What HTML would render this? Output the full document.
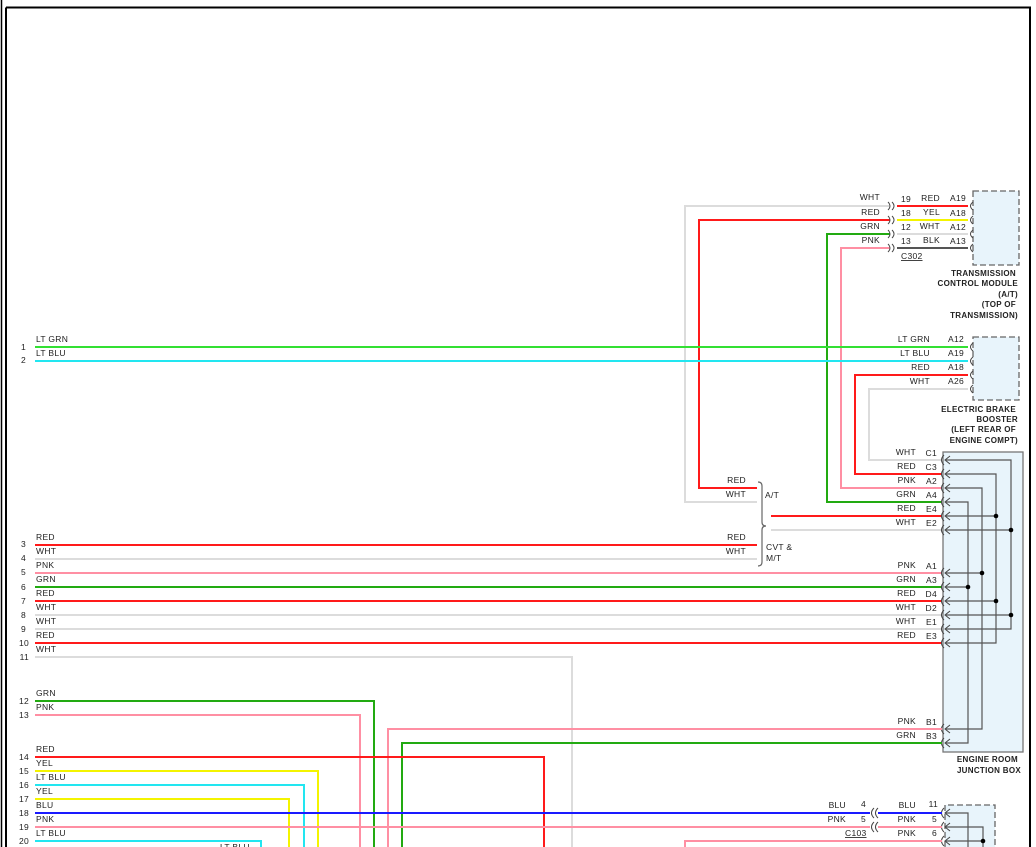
<!DOCTYPE html>
<html><head><meta charset="utf-8"><style>
html,body{margin:0;padding:0;background:#fff;width:1036px;height:847px;overflow:hidden}
svg{display:block}
text{font-family:"Liberation Sans",sans-serif;font-size:8.5px;fill:#222;letter-spacing:0.3px}
.r{text-anchor:end}
.b{font-weight:bold;font-size:8px}
.w{fill:none;stroke-width:2}
.k{fill:none;stroke:#555;stroke-width:1.2}
.c{fill:none;stroke:#444;stroke-width:1}
</style></head><body>
<svg width="1036" height="847" viewBox="0 0 1036 847">
<!-- frame -->
<line x1="1.5" y1="0" x2="1.5" y2="847" stroke="#000" stroke-width="1.5"/>
<line x1="6" y1="7.5" x2="6" y2="847" stroke="#000" stroke-width="2"/>
<line x1="6" y1="7.5" x2="1031" y2="7.5" stroke="#000" stroke-width="2"/>
<line x1="1030" y1="7.5" x2="1030" y2="847" stroke="#000" stroke-width="2"/>

<!-- boxes -->
<rect x="973" y="191" width="46" height="74" fill="#e8f4fb" stroke="#666" stroke-dasharray="6,3" stroke-width="1.3"/>
<rect x="973" y="337" width="46" height="63" fill="#e8f4fb" stroke="#666" stroke-dasharray="6,3" stroke-width="1.3"/>
<rect x="943" y="452" width="80" height="300" fill="#e8f4fb" stroke="#777" stroke-width="1.3"/>
<path d="M945,847 V805 H995 V847" fill="#e8f4fb" stroke="#666" stroke-dasharray="6,3" stroke-width="1.3"/>

<!-- TCM top wires -->
<line class="w" x1="897" y1="206" x2="968" y2="206" stroke="#ff1a1a"/>
<line class="w" x1="897" y1="220" x2="968" y2="220" stroke="#f4f400"/>
<line class="w" x1="897" y1="234" x2="968" y2="234" stroke="#dcdcdc"/>
<line class="w" x1="897" y1="248" x2="968" y2="248" stroke="#555"/>
<path class="w" d="M890,206 H685 V502 H757" stroke="#dcdcdc"/>
<path class="w" d="M890,220 H699 V488 H757" stroke="#ff1a1a"/>
<path class="w" d="M890,234 H827 V502 H942" stroke="#22aa11"/>
<path class="w" d="M890,248 H841 V488 H942" stroke="#ff8fa3"/>
<!-- C302 connector marks -->
<g class="c">
<path d="M888,202 Q892,206 888,210 M892,202 Q896,206 892,210"/>
<path d="M888,216 Q892,220 888,224 M892,216 Q896,220 892,224"/>
<path d="M888,230 Q892,234 888,238 M892,230 Q896,234 892,238"/>
<path d="M888,244 Q892,248 888,252 M892,244 Q896,248 892,252"/>
<path d="M973,202 Q968,206 973,210 M973,216 Q968,220 973,224 M973,230 Q968,234 973,238 M973,244 Q968,248 973,252"/>
<path d="M973,343 Q968,347 973,351 M973,357 Q968,361 973,365 M973,371 Q968,375 973,379 M973,385 Q968,389 973,393"/>
</g>
<text class="r" x="880" y="200">WHT</text>
<text class="r" x="880" y="215">RED</text>
<text class="r" x="880" y="229">GRN</text>
<text class="r" x="880" y="243">PNK</text>
<text x="901" y="202">19</text><text class="r" x="940" y="201">RED</text><text class="r" x="966" y="201">A19</text>
<text x="901" y="216">18</text><text class="r" x="940" y="215">YEL</text><text class="r" x="966" y="216">A18</text>
<text x="901" y="230">12</text><text class="r" x="940" y="229">WHT</text><text class="r" x="966" y="230">A12</text>
<text x="901" y="244">13</text><text class="r" x="940" y="243">BLK</text><text class="r" x="966" y="244">A13</text>
<text x="901" y="259" text-decoration="underline">C302</text>
<text class="r b" x="1016" y="276">TRANSMISSION</text>
<text class="r b" x="1018" y="286">CONTROL MODULE</text>
<text class="r b" x="1018" y="297">(A/T)</text>
<text class="r b" x="1016" y="307">(TOP OF</text>
<text class="r b" x="1018" y="318">TRANSMISSION)</text>

<!-- rows 1,2 -->
<line class="w" x1="35" y1="347" x2="968" y2="347" stroke="#33e033"/>
<line class="w" x1="35" y1="361" x2="968" y2="361" stroke="#22e6f0"/>
<text class="r" x="930" y="342">LT GRN</text><text class="r" x="964" y="342">A12</text>
<text class="r" x="930" y="356">LT BLU</text><text class="r" x="964" y="356">A19</text>
<text class="r" x="930" y="370">RED</text><text class="r" x="964" y="370">A18</text>
<text class="r" x="930" y="384">WHT</text><text class="r" x="964" y="384">A26</text>
<path class="w" d="M968,375 H855 V474 H942" stroke="#ff1a1a"/>
<path class="w" d="M968,389 H869 V460 H942" stroke="#dcdcdc"/>
<text class="r b" x="1016" y="412">ELECTRIC BRAKE</text>
<text class="r b" x="1018" y="422">BOOSTER</text>
<text class="r b" x="1016" y="432">(LEFT REAR OF</text>
<text class="r b" x="1018" y="443">ENGINE COMPT)</text>

<!-- A/T bracket -->
<text class="r" x="746" y="483">RED</text>
<text class="r" x="746" y="497">WHT</text>
<text x="765" y="498">A/T</text>
<path d="M758,482 Q762,482 762,486 V522 Q762,526 766,526 Q762,526 762,530 V562 Q762,566 758,566" fill="none" stroke="#666" stroke-width="1.2"/>
<line class="w" x1="771" y1="516" x2="942" y2="516" stroke="#ff1a1a"/>
<line class="w" x1="771" y1="530" x2="942" y2="530" stroke="#dcdcdc"/>
<text class="r" x="746" y="540">RED</text>
<text class="r" x="746" y="554">WHT</text>
<text x="766" y="550">CVT &amp;</text>
<text x="766" y="561">M/T</text>

<!-- left rows 3-11 -->
<line class="w" x1="35" y1="545" x2="757" y2="545" stroke="#ff1a1a"/>
<line class="w" x1="35" y1="559" x2="757" y2="559" stroke="#dcdcdc"/>
<line class="w" x1="35" y1="573" x2="942" y2="573" stroke="#ff8fa3"/>
<line class="w" x1="35" y1="587" x2="942" y2="587" stroke="#22aa11"/>
<line class="w" x1="35" y1="601" x2="942" y2="601" stroke="#ff1a1a"/>
<line class="w" x1="35" y1="615" x2="942" y2="615" stroke="#dcdcdc"/>
<line class="w" x1="35" y1="629" x2="942" y2="629" stroke="#dcdcdc"/>
<line class="w" x1="35" y1="643" x2="942" y2="643" stroke="#ff1a1a"/>
<path class="w" d="M35,657 H572 V847" stroke="#dcdcdc"/>

<!-- JB labels -->
<text class="r" x="916" y="455">WHT</text><text class="r" x="937" y="456">C1</text>
<text class="r" x="916" y="469">RED</text><text class="r" x="937" y="470">C3</text>
<text class="r" x="916" y="483">PNK</text><text class="r" x="937" y="484">A2</text>
<text class="r" x="916" y="497">GRN</text><text class="r" x="937" y="498">A4</text>
<text class="r" x="916" y="511">RED</text><text class="r" x="937" y="512">E4</text>
<text class="r" x="916" y="525">WHT</text><text class="r" x="937" y="526">E2</text>
<text class="r" x="916" y="568">PNK</text><text class="r" x="937" y="569">A1</text>
<text class="r" x="916" y="582">GRN</text><text class="r" x="937" y="583">A3</text>
<text class="r" x="916" y="596">RED</text><text class="r" x="937" y="597">D4</text>
<text class="r" x="916" y="610">WHT</text><text class="r" x="937" y="611">D2</text>
<text class="r" x="916" y="624">WHT</text><text class="r" x="937" y="625">E1</text>
<text class="r" x="916" y="638">RED</text><text class="r" x="937" y="639">E3</text>
<text class="r" x="916" y="724">PNK</text><text class="r" x="937" y="725">B1</text>
<text class="r" x="916" y="738">GRN</text><text class="r" x="937" y="739">B3</text>
<text class="r b" x="1018" y="762">ENGINE ROOM</text>
<text class="r b" x="1021" y="773">JUNCTION BOX</text>

<!-- JB internal -->
<g class="k">
<path d="M946,460 H1011 V629 H946 M946,530 H1011 M946,615 H1011"/>
<path d="M946,474 H996 V643 H946 M946,516 H996 M946,601 H996"/>
<path d="M946,488 H982 V729 H946 M946,573 H982"/>
<path d="M946,502 H968 V743 H946 M946,587 H968"/>
<path d="M946,813 H968 V847 M946,827 H983 V847 M946,841 H983"/>
</g>
<g fill="#000">
<circle cx="1011" cy="530" r="2.3"/><circle cx="1011" cy="615" r="2.3"/>
<circle cx="996" cy="516" r="2.3"/><circle cx="996" cy="601" r="2.3"/>
<circle cx="982" cy="573" r="2.3"/><circle cx="968" cy="587" r="2.3"/>
<circle cx="983" cy="841" r="2.3"/>
</g>
<g class="c">
<path d="M944,455 Q939,460 944,465 M950,456 L945,460 L950,464"/>
<path d="M944,469 Q939,474 944,479 M950,470 L945,474 L950,478"/>
<path d="M944,483 Q939,488 944,493 M950,484 L945,488 L950,492"/>
<path d="M944,497 Q939,502 944,507 M950,498 L945,502 L950,506"/>
<path d="M944,511 Q939,516 944,521 M950,512 L945,516 L950,520"/>
<path d="M944,525 Q939,530 944,535 M950,526 L945,530 L950,534"/>
<path d="M944,568 Q939,573 944,578 M950,569 L945,573 L950,577"/>
<path d="M944,582 Q939,587 944,592 M950,583 L945,587 L950,591"/>
<path d="M944,596 Q939,601 944,606 M950,597 L945,601 L950,605"/>
<path d="M944,610 Q939,615 944,620 M950,611 L945,615 L950,619"/>
<path d="M944,624 Q939,629 944,634 M950,625 L945,629 L950,633"/>
<path d="M944,638 Q939,643 944,648 M950,639 L945,643 L950,647"/>
<path d="M944,724 Q939,729 944,734 M950,725 L945,729 L950,733"/>
<path d="M944,738 Q939,743 944,748 M950,739 L945,743 L950,747"/>
<path d="M944,808 Q939,813 944,818 M950,809 L945,813 L950,817"/>
<path d="M944,822 Q939,827 944,832 M950,823 L945,827 L950,831"/>
<path d="M944,836 Q939,841 944,846 M950,837 L945,841 L950,845"/>
<path d="M874,808 Q869,813 874,818 M878,808 Q873,813 878,818"/>
<path d="M874,822 Q869,827 874,832 M878,822 Q873,827 878,832"/>
</g>

<!-- rows 12-20 -->
<path class="w" d="M35,701 H374 V847" stroke="#22aa11"/>
<path class="w" d="M35,715 H360 V847" stroke="#ff8fa3"/>
<path class="w" d="M942,729 H388 V847" stroke="#ff8fa3"/>
<path class="w" d="M942,743 H402 V847" stroke="#22aa11"/>
<path class="w" d="M35,757 H544 V847" stroke="#ff1a1a"/>
<path class="w" d="M35,771 H318 V847" stroke="#f4f400"/>
<path class="w" d="M35,785 H304 V847" stroke="#22e6f0"/>
<path class="w" d="M35,799 H289 V847" stroke="#f4f400"/>
<line class="w" x1="35" y1="813" x2="870" y2="813" stroke="#1a1aff"/>
<line class="w" x1="35" y1="827" x2="870" y2="827" stroke="#ff8fa3"/>
<line class="w" x1="878" y1="813" x2="942" y2="813" stroke="#1a1aff"/>
<line class="w" x1="878" y1="827" x2="942" y2="827" stroke="#ff8fa3"/>
<path class="w" d="M942,841 H685 V847" stroke="#ff8fa3"/>
<path class="w" d="M35,841 H261 V847" stroke="#22e6f0"/>
<text x="220" y="850">LT BLU</text>
<text class="r" x="846" y="808">BLU</text><text x="861" y="807">4</text>
<text class="r" x="846" y="822">PNK</text><text x="861" y="822">5</text>
<text x="845" y="836" text-decoration="underline">C103</text>
<text class="r" x="916" y="808">BLU</text><text class="r" x="938" y="807">11</text>
<text class="r" x="916" y="822">PNK</text><text class="r" x="937" y="822">5</text>
<text class="r" x="916" y="836">PNK</text><text class="r" x="937" y="836">6</text>

<!-- left labels -->
<g>
<text x="36" y="342">LT GRN</text><text class="r" x="26" y="350">1</text>
<text x="36" y="356">LT BLU</text><text class="r" x="26" y="363">2</text>
<text x="36" y="540">RED</text><text class="r" x="26" y="547">3</text>
<text x="36" y="554">WHT</text><text class="r" x="26" y="561">4</text>
<text x="36" y="568">PNK</text><text class="r" x="26" y="575">5</text>
<text x="36" y="582">GRN</text><text class="r" x="26" y="590">6</text>
<text x="36" y="596">RED</text><text class="r" x="26" y="604">7</text>
<text x="36" y="610">WHT</text><text class="r" x="26" y="618">8</text>
<text x="36" y="624">WHT</text><text class="r" x="26" y="632">9</text>
<text x="36" y="638">RED</text><text class="r" x="29" y="646">10</text>
<text x="36" y="652">WHT</text><text class="r" x="29" y="660">11</text>
<text x="36" y="696">GRN</text><text class="r" x="29" y="704">12</text>
<text x="36" y="710">PNK</text><text class="r" x="29" y="718">13</text>
<text x="36" y="752">RED</text><text class="r" x="29" y="760">14</text>
<text x="36" y="766">YEL</text><text class="r" x="29" y="774">15</text>
<text x="36" y="780">LT BLU</text><text class="r" x="29" y="788">16</text>
<text x="36" y="794">YEL</text><text class="r" x="29" y="802">17</text>
<text x="36" y="808">BLU</text><text class="r" x="29" y="816">18</text>
<text x="36" y="822">PNK</text><text class="r" x="29" y="830">19</text>
<text x="36" y="836">LT BLU</text><text class="r" x="29" y="844">20</text>
</g>
</svg>
</body></html>
